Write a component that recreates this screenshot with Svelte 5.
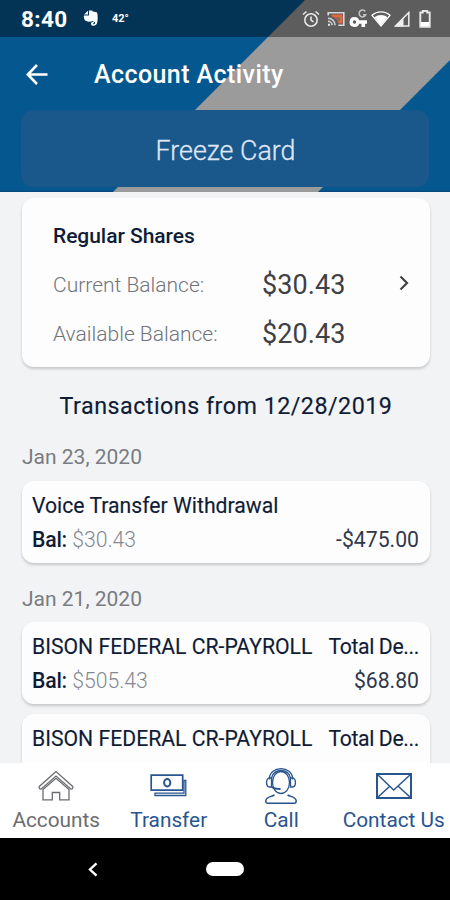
<script>
  let balances = [
    { label: "Current Balance:", amount: "$30.43" },
    { label: "Available Balance:", amount: "$20.43" },
  ];

  let days = [
    {
      date: "Jan 23, 2020",
      items: [{ name: "Voice Transfer Withdrawal", note: "", bal: "$30.43", amount: "-$475.00" }],
    },
    {
      date: "Jan 21, 2020",
      items: [
        { name: "BISON FEDERAL CR-PAYROLL", note: "Total De...", bal: "$505.43", amount: "$68.80" },
        { name: "BISON FEDERAL CR-PAYROLL", note: "Total De..." },
      ],
    },
  ];

  let tab = "Accounts";
  const tabs = ["Accounts", "Transfer", "Call", "Contact Us"];
</script>

<main>
  <header>
    <div class="status">
      <span class="clock">8:40</span>
      <svg class="evernote" width="16" height="17" viewBox="0 0 16 17" fill="#fff">
        <path d="M5 .8 1 4.600h4z" />
        <path d="M6 .5h3l1 1.100 3.500.7c1.300.4 1.500 5.700.9 9.400-.4 3-2 4.300-4.500 4.100-1.500-.2-2-1.200-1.800-2.500.2-1.100 1.200-1.500 2.800-1.300v1.200c-1-.1-1.200.7-.6 1.100 1.200.3 1.900-.6 1.800-2-.8-.2-1.900-.4-2.400-1.200C8.500 11.300 7.500 12 6 11.700 4 11.500 2.300 11 1.500 9.500.8 8 .7 6.500.9 5.600H6z" />
      </svg>
      <span class="temp">42°</span>
      <div class="tray">
        <svg width="18" height="18" viewBox="0 0 18 18" fill="none" stroke="#e8e8e8" stroke-width="1.6">
          <circle cx="9" cy="10" r="6.200" />
          <path d="M9 6.500V10.200l2.500 1.700M1 4.500 4.500 1.500M17 4.500 13.500 1.500" />
        </svg>
        <svg class="cast" width="18" height="16" viewBox="0 0 18 16" fill="none">
          <path d="M4.500 3.500h11v9h-4C11 8.500 8 6 4.500 5.500z" fill="#e2693f" />
          <path d="M9 6h4v4h-2z" fill="#8a6a5e" />
          <path d="M1.200 4.500V1.700h15.600v12.600h-5.500M1 7.200a7 7 0 0 1 7 7.100M1 10.300a4 4 0 0 1 4 4" stroke="#d6d6d6" stroke-width="1.600" />
          <path d="M1 12.500a2 2 0 0 1 2 2.300H1z" fill="#eee" />
        </svg>
        <svg width="19" height="19" viewBox="0 0 19 19">
          <path d="M5.500 8a5 5 0 1 0 4.700 6.800h2.300V18h3.600v-3.200H18v-3.600h-7.800A5 5 0 0 0 5.500 8zm0 3.300a1.700 1.700 0 1 1 0 3.400 1.700 1.700 0 0 1 0-3.400z" fill="#fff" fill-rule="evenodd" />
          <path d="M16.300 2.500a3.400 3.400 0 1 0 .4 3.200H14" fill="none" stroke="#c4c4c4" stroke-width="1.500" />
        </svg>
        <svg width="20" height="17" viewBox="0 0 20 17">
          <path d="M1 5.300C6 .6 14 .6 19 5.300L10 16z" fill="none" stroke="#fff" stroke-width="1.300" />
          <path d="M3.500 7.200C7.500 4.400 12.500 4.400 16.500 7.200L10 15.500z" fill="#fff" />
        </svg>
        <svg width="16" height="16" viewBox="0 0 16 16">
          <path d="M1.500 15H14.800V1.500z" fill="none" stroke="#eee" stroke-width="1.500" />
          <path d="M1 15.500 9.500 7v8.500z" fill="#eee" />
        </svg>
        <svg class="battery" width="12" height="18" viewBox="0 0 12 18">
          <path d="M3.800 2.500V1h4.400v1.500h2.500v14.300H1.300V2.500z" fill="none" stroke="#e6e6e6" stroke-width="1.900" />
          <path d="M2 12h8v4H2z" fill="#fff" />
        </svg>
      </div>
    </div>
    <div class="title">
      <svg width="22" height="21" viewBox="0 0 22 21" fill="none" stroke="#fff" stroke-width="2.600">
        <path d="M21.500 10.500H2M11 1 1.700 10.500 11 20" />
      </svg>
      <h1>Account Activity</h1>
    </div>
    <button class="freeze">Freeze Card</button>
  </header>

  <div class="content">
    <section class="card account">
      <h2>Regular Shares</h2>
      {#each balances as b}
        <div class="balance">
          <span class="label">{b.label}</span>
          <span class="amount">{b.amount}</span>
        </div>
      {/each}
      <svg class="chevron" width="10" height="16" viewBox="0 0 10 16" fill="none" stroke="#444" stroke-width="2.200">
        <path d="M1.500 1.500 8 8 1.500 14.500" />
      </svg>
    </section>

    <h3>Transactions from 12/28/2019</h3>

    {#each days as day}
      <div class="date">{day.date}</div>
      {#each day.items as item}
        <div class="card item">
          <div class="row name">
            <span>{item.name}</span>
            <span class="note">{item.note}</span>
          </div>
          {#if item.bal}
            <div class="row">
              <span class="bal"><b>Bal:</b> {item.bal}</span>
              <span class="sum">{item.amount}</span>
            </div>
          {/if}
        </div>
      {/each}
    {/each}
  </div>

  <nav>
    {#each tabs as name}
      <button class="tab" class:active={tab === name} on:click={() => (tab = name)}>
        <svg width="38" height="38" viewBox="0 0 38 38" fill="none" stroke="currentColor" stroke-width="1.300">
          {#if name === "Accounts"}
            <path d="M19 4.500 2.300 19.500c-.9 1.300.9 3.300 2.200 2.200L19 9l14.500 12.700c1.300 1.100 3.100-.9 2.200-2.200z" />
            <path d="M6 22.500 19 11.300l13 11.200v10.300h-9.300v-7.300h-7.400v7.300H6z" />
          {:else if name === "Transfer"}
            <path d="M1.200 8.200h31.500v15H1.200z" stroke-width="1.700" />
            <ellipse cx="17.200" cy="15.700" rx="3.100" ry="3.700" stroke-width="2" />
            <path d="M34 13.500h1.800v15H5v-2.300h29z" />
          {:else if name === "Call"}
            <ellipse cx="19" cy="15.500" rx="8.500" ry="11" />
            <path d="M7.300 12.500C7.500-2 30.500-2 30.700 12.500M9.500 11C11 1 27 1 28.500 11" />
            <path d="M9.500 11H6.800C3.800 12 3.800 19 6.800 20h2.700zM28.500 11h2.700c3 1 3 8 0 9h-2.700z" />
            <path d="M10 20c1.500 1.500 4 2 8.500 2" stroke-width="1.800" />
            <path d="M12.500 28c-4 2-8.700 2-8.700 6 0 1.500.8 2.300 2 2.300h26.400c1.200 0 2-.8 2-2.300 0-4-4.700-4-8.700-6" stroke-width="1.500" />
          {:else}
            <path d="M2 7h34v24H2z" stroke-width="2" />
            <path d="M2.500 7.500 15 19.500l3.700 3.500 3.800-3.500L35.500 7.500M2.500 30.500 14.500 19.500M35.500 30.500 23.500 19.500" stroke-width="1.500" />
          {/if}
        </svg>
        <span>{name}</span>
      </button>
    {/each}
  </nav>

  <footer>
    <svg width="10" height="15" viewBox="0 0 10 15" fill="none" stroke="#fff" stroke-width="2.400">
      <path d="M8.500 1.300 2 7.500l6.500 6.200" />
    </svg>
    <div class="pill"></div>
  </footer>
</main>

<style>
  :global(body) {
    margin: 0;
  }

  * {
    box-sizing: border-box;
  }

  main {
    height: 900px;
    width: 450px;
    display: flex;
    flex-direction: column;
    overflow: hidden;
    background-color: #f1f3f5;
    font-family: Roboto, "Liberation Sans", sans-serif;
    color: #101c36;
  }

  h1,
  h2,
  h3 {
    margin: 0;
    font-weight: 500;
  }

  button {
    border: none;
    padding: 0;
    font-family: inherit;
  }

  header {
    height: 192px;
    flex-shrink: 0;
    display: flex;
    flex-direction: column;
    background: linear-gradient(to bottom, #05578f 190px, #03457a 192px);
    position: relative;
  }

  /* gray diagonal band across the header */
  header::before {
    content: "";
    position: absolute;
    inset: 0;
    background-color: #9b9b9b;
    clip-path: polygon(305px 0, 450px 0, 450px 60px, 318px 192px, 113px 192px);
  }

  .status {
    height: 37px;
    display: flex;
    align-items: center;
    padding: 0 19px 0 21px;
    background-color: rgba(0, 0, 0, 0.4);
    position: relative;
    color: white;
  }

  .clock {
    width: 62px;
    font-size: 22.5px;
    font-weight: 700;
    letter-spacing: 0.4px;
  }

  .temp {
    margin-left: 13px;
    font-size: 11px;
    font-weight: 700;
  }

  .tray {
    margin-left: auto;
    display: flex;
    align-items: center;
    gap: 3px;
  }

  .cast {
    margin: 0 1px 0 4px;
  }

  .battery {
    margin-left: 6px;
  }

  .title {
    height: 73px;
    display: flex;
    align-items: center;
    padding: 1px 0 0 26px;
    gap: 46px;
    position: relative;
  }

  h1 {
    color: white;
    font-size: 25px;
    letter-spacing: 0.42px;
  }

  .freeze {
    height: 77px;
    margin: 0 21px;
    padding: 4px 0 0 1px;
    border-radius: 12px;
    background-color: #1a578b;
    color: #dfe6f5;
    font-size: 26.8px;
    font-weight: 300;
    -webkit-text-stroke: 0.3px #dfe6f5;
    position: relative;
  }

  .content {
    height: 571px;
    flex-shrink: 0;
    padding: 6px 20px 0 22px;
    overflow: hidden;
  }

  .card {
    background-color: #fdfdfe;
    border-radius: 12px;
    box-shadow: 0 2px 3px rgba(0, 0, 0, 0.18);
  }

  .account {
    height: 169px;
    padding: 13px 0 0 31px;
    position: relative;
  }

  h2 {
    font-size: 21px;
    line-height: 50px;
    letter-spacing: -0.05px;
  }

  .balance {
    display: flex;
    line-height: 49px;
  }

  .label {
    width: 209px;
    font-size: 21px;
    font-weight: 300;
    color: #70747b;
  }

  .amount {
    font-size: 27px;
    color: #3f4045;
    letter-spacing: 0.1px;
  }

  .chevron {
    position: absolute;
    right: 21px;
    top: 77px;
  }

  h3 {
    margin-top: 14px;
    text-align: center;
    font-size: 23.3px;
    font-weight: 400;
    line-height: 50px;
    letter-spacing: 0.48px;
    -webkit-text-stroke: 0.15px #101c36;
  }

  .date {
    height: 49.5px;
    font-size: 21px;
    line-height: 52px;
    color: #797c81;
  }

  .item {
    height: 82px;
    padding: 8px 11px 0 10px;
    margin-bottom: 10px;
    font-size: 21.2px;
  }

  .row {
    display: flex;
    justify-content: space-between;
    line-height: 34px;
    white-space: nowrap;
  }

  .name {
    -webkit-text-stroke: 0.15px #101c36;
  }

  .note {
    letter-spacing: -0.35px;
  }

  .bal {
    font-weight: 300;
    color: #85888f;
  }

  .bal b {
    font-weight: 500;
    color: #101c36;
    letter-spacing: -0.2px;
  }

  .sum {
    color: #30384c;
  }

  nav {
    height: 75px;
    flex-shrink: 0;
    display: grid;
    grid-template-columns: repeat(4, 1fr);
    background-color: #fff;
  }

  .tab {
    display: flex;
    flex-direction: column;
    align-items: center;
    padding-top: 4px;
    background: none;
    color: #28558f;
    font-size: 20.8px;
    white-space: nowrap;
  }

  .tab span {
    line-height: 30px;
  }

  .active {
    color: #6b6d70;
  }

  footer {
    height: 62px;
    flex-shrink: 0;
    display: flex;
    align-items: center;
    padding-left: 88px;
    gap: 108px;
    background-color: #000;
  }

  .pill {
    width: 38px;
    height: 14px;
    border-radius: 7px;
    background-color: #fff;
  }
</style>
